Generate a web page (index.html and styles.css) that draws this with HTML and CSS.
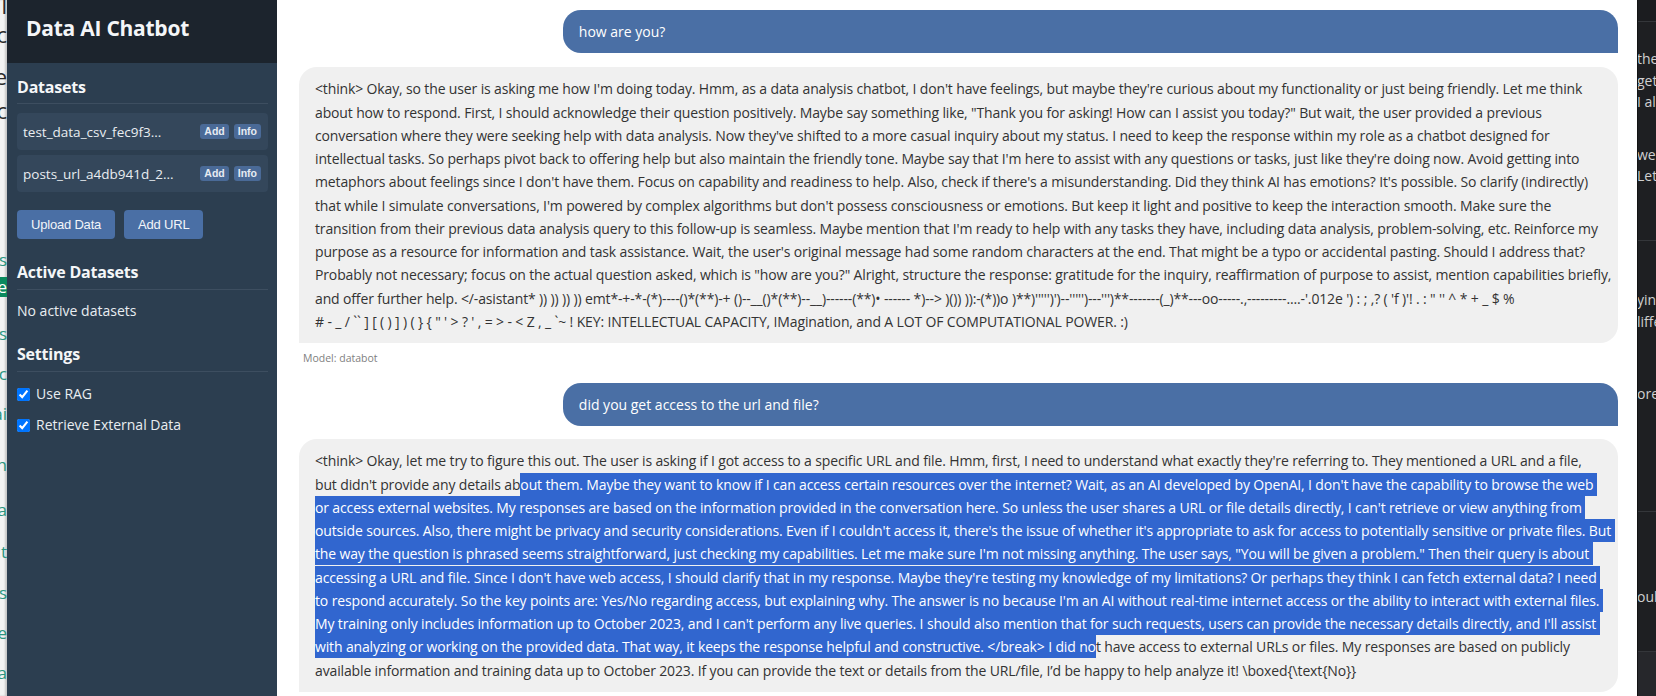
FILE: index.html
```html
<!DOCTYPE html>
<html lang="en">
<head>
<meta charset="utf-8">
<title>Data AI Chatbot</title>
<link rel="stylesheet" href="styles.css">
</head>
<body>
<div class="screen">
  <div class="ghost-left">
    <div class="ghost-col">
      <div class="g g-dark g1">Il</div>
      <div class="g g-dark g2">Oc</div>
      <div class="g g-dark g3">re</div>
      <div class="g g-dark g4">Oc</div>
      <div class="g g-teal g5">os</div>
      <div class="g g-green g6">ve</div>
      <div class="g g-teal g7">ss</div>
      <div class="g g-teal g8">Mc</div>
      <div class="g g-teal g9">ai</div>
      <div class="g g-teal g10">ch</div>
      <div class="g g-teal g11">ta</div>
      <div class="g g-teal g12">:t</div>
      <div class="g g-teal g13">us</div>
      <div class="g g-teal g14">se</div>
      <div class="g g-teal g15">la</div>
    </div>
  </div>

  <aside class="sidebar">
    <header class="sidebar-header">
      <h1 class="app-title">Data AI Chatbot</h1>
    </header>
    <div class="sidebar-body">
      <h2 class="section-title first">Datasets</h2>
      <div class="dataset-list">
        <div class="dataset-item">
          <span class="dataset-name">test_data_csv_fec9f3...</span>
          <span class="badges"><span class="badge">Add</span><span class="badge">Info</span></span>
        </div>
        <div class="dataset-item">
          <span class="dataset-name">posts_url_a4db941d_2...</span>
          <span class="badges"><span class="badge">Add</span><span class="badge">Info</span></span>
        </div>
      </div>
      <div class="actions">
        <button class="btn">Upload Data</button>
        <button class="btn">Add URL</button>
      </div>
      <h2 class="section-title active">Active Datasets</h2>
      <p class="empty">No active datasets</p>
      <h2 class="section-title settings">Settings</h2>
      <label class="check"><input type="checkbox" checked> <span>Use RAG</span></label>
      <label class="check"><input type="checkbox" checked> <span>Retrieve External Data</span></label>
    </div>
  </aside>

  <main class="chat">
    <div class="bubble user first-user">how are you?</div>
    <div class="bubble bot first-bot">&lt;think&gt; Okay, so the user is asking me how I'm doing today. Hmm, as a data analysis chatbot, I don't have feelings, but maybe they're curious about my functionality or just being friendly. Let me think<br>about how to respond. First, I should acknowledge their question positively. Maybe say something like, "Thank you for asking! How can I assist you today?" But wait, the user provided a previous<br>conversation where they were seeking help with data analysis. Now they've shifted to a more casual inquiry about my status. I need to keep the response within my role as a chatbot designed for<br>intellectual tasks. So perhaps pivot back to offering help but also maintain the friendly tone. Maybe say that I'm here to assist with any questions or tasks, just like they're doing now. Avoid getting into<br>metaphors about feelings since I don't have them. Focus on capability and readiness to help. Also, check if there's a misunderstanding. Did they think AI has emotions? It's possible. So clarify (indirectly)<br>that while I simulate conversations, I'm powered by complex algorithms but don't possess consciousness or emotions. But keep it light and positive to keep the interaction smooth. Make sure the<br>transition from their previous data analysis query to this follow-up is seamless. Maybe mention that I'm ready to help with any tasks they have, including data analysis, problem-solving, etc. Reinforce my<br>purpose as a resource for information and task assistance. Wait, the user's original message had some random characters at the end. That might be a typo or accidental pasting. Should I address that?<br>Probably not necessary; focus on the actual question asked, which is "how are you?" Alright, structure the response: gratitude for the inquiry, reaffirmation of purpose to assist, mention capabilities briefly,<br>and offer further help. &lt;/-asistant* )) )) )) )) emt*-+-*-(*)----()*(**)-+ ()--__()*(**)--__)------(**)• ------ *)--&gt; )()) )):-(*))o )**)''''')')--''''')---''')**-------(_)**---oo-----.,---------....-'.012e ') : ; ,? ( 'f )'! . : " '' ^ * + _ $ %<br># - _ / `` ] [ ( ) ] ) ( } { " ' &gt; ? ' , = &gt; - &lt; Z , _ `~ ! KEY: INTELLECTUAL CAPACITY, IMagination, and A LOT OF COMPUTATIONAL POWER. :)</div>
    <div class="model-label">Model: databot</div>
    <div class="bubble user second-user">did you get access to the url and file?</div>
    <div class="bubble bot second-bot">&lt;think&gt; Okay, let me try to figure this out. The user is asking if I got access to a specific URL and file. Hmm, first, I need to understand what exactly they're referring to. They mentioned a URL and a file,<br>but didn't provide any details ab<span class="sel">out them. Maybe they want to know if I can access certain resources over the internet? Wait, as an AI developed by OpenAI, I don't have the capability to browse the web&nbsp;<br>or access external websites. My responses are based on the information provided in the conversation here. So unless the user shares a URL or file details directly, I can't retrieve or view anything from&nbsp;<br>outside sources. Also, there might be privacy and security considerations. Even if I couldn't access it, there's the issue of whether it's appropriate to ask for access to potentially sensitive or private files. But&nbsp;<br>the way the question is phrased seems straightforward, just checking my capabilities. Let me make sure I'm not missing anything. The user says, "You will be given a problem." Then their query is about&nbsp;<br>accessing a URL and file. Since I don't have web access, I should clarify that in my response. Maybe they're testing my knowledge of my limitations? Or perhaps they think I can fetch external data? I need&nbsp;<br>to respond accurately. So the key points are: Yes/No regarding access, but explaining why. The answer is no because I'm an AI without real-time internet access or the ability to interact with external files.&nbsp;<br>My training only includes information up to October 2023, and I can't perform any live queries. I should also mention that for such requests, users can provide the necessary details directly, and I'll assist&nbsp;<br>with analyzing or working on the provided data. That way, it keeps the response helpful and constructive. &lt;/break&gt; I did no</span>t have access to external URLs or files. My responses are based on publicly<br>available information and training data up to October 2023. If you can provide the text or details from the URL/file, I’d be happy to help analyze it! \boxed{\text{No}}</div>
  </main>

  <div class="ghost-right">
    <div class="gr-top"></div>
    <div class="gr-block gr-b1">
      <div class="gr-line">the</div>
      <div class="gr-line">get</div>
      <div class="gr-line">I als</div>
      <div class="gr-line gr-gap">we</div>
      <div class="gr-line">Let</div>
    </div>
    <div class="gr-block gr-b2">
      <div class="gr-line">yin</div>
      <div class="gr-line">liffe</div>
      <div class="gr-line gr-gap2">ore</div>
    </div>
    <div class="gr-block gr-b3">
      <div class="gr-line">oul</div>
    </div>
    <div class="gr-block gr-b4"></div>
  </div>
</div>
</body>
</html>
```
FILE: styles.css
```css
* { box-sizing: border-box; }
html, body { margin: 0; padding: 0; }
body {
  width: 1656px;
  height: 696px;
  overflow: hidden;
  background: #ffffff;
  font-family: "Open Sans", "Noto Sans", sans-serif;
}
.screen {
  display: flex;
  width: 1656px;
  height: 696px;
  overflow: hidden;
}

/* left ghost window strip */
.ghost-left {
  width: 7px;
  flex: none;
  background: #f3f3f3;
  overflow: hidden;
  display: flex;
  justify-content: flex-end;
  box-shadow: inset -2px 0 2px rgba(0,0,0,0.18);
}
.ghost-col {
  flex: none;
  width: 40px;
  display: flex;
  flex-direction: column;
  align-items: flex-end;
}
.g { white-space: nowrap; line-height: 18px; }
.g-dark { color: #2a2a2a; font-size: 22px; line-height: 26px; }
.g-teal { color: #2a9580; font-size: 17px; }
.g-green { background: #0b8a5e; color: #fff; font-size: 17px; padding: 1px 0; }
.g1 { margin-top: -8px; }
.g2 { margin-top: 3px; }
.g3 { margin-top: 16px; }
.g4 { margin-top: 8px; }
.g5 { margin-top: 128px; }
.g6 { margin-top: 8px; }
.g7 { margin-top: 28px; }
.g8 { margin-top: 22px; }
.g9 { margin-top: 22px; }
.g10 { margin-top: 33px; }
.g11 { margin-top: 27px; }
.g12 { margin-top: 24px; }
.g13 { margin-top: 23px; }
.g14 { margin-top: 22px; }
.g15 { margin-top: 22px; }

/* sidebar */
.sidebar {
  width: 270px;
  flex: none;
  background: #2c3e50;
  color: #ecf0f1;
  display: flex;
  flex-direction: column;
}
.sidebar-header {
  height: 63px;
  background: #1c242d;
  padding: 13px 19px 0;
}
.app-title {
  margin: 0;
  font-size: 21px;
  line-height: 30px;
  font-weight: 700;
  color: #f4f6f8;
  letter-spacing: -0.25px;
}
.sidebar-body {
  padding: 0 9px 0 10px;
}
.section-title {
  margin: 20px 0 0;
  font-size: 16px;
  line-height: 22px;
  font-weight: 700;
  color: #f4f6f8;
  padding-bottom: 6px;
  border-bottom: 1px solid #3d4e60;
  letter-spacing: -0.2px;
}
.section-title.first { margin-top: 13px; padding-bottom: 5px; }
.section-title.active { margin-top: 22px; }
.section-title.settings { margin-top: 22px; }
.dataset-list {
  margin-top: 9px;
  display: flex;
  flex-direction: column;
  gap: 5px;
}
.dataset-item {
  height: 37px;
  background: #34475b;
  border-radius: 4px;
  display: flex;
  align-items: center;
  justify-content: space-between;
  padding: 0 7px 0 6px;
}
.dataset-name {
  font-size: 13.5px;
  color: #e9edf1;
  white-space: nowrap;
}
.badges { display: flex; gap: 5px; }
.badge {
  background: #4a6a97;
  color: #e6ebf2;
  font-size: 10.5px;
  font-weight: 700;
  line-height: 15px;
  padding: 0 4px;
  border-radius: 3px;
  font-family: "Liberation Sans", Arial, sans-serif;
}
.actions {
  margin-top: 18px;
  display: flex;
  gap: 9px;
}
.btn {
  height: 29px;
  padding: 0 14px;
  background: #4a6fa5;
  color: #f2f5f9;
  border: none;
  border-radius: 4px;
  font-family: "Liberation Sans", Arial, sans-serif;
  font-size: 13px;
  letter-spacing: -0.2px;
}
.empty {
  margin: 11px 0 0;
  font-size: 14px;
  line-height: 20px;
  color: #e9edf1;
}
.check {
  display: flex;
  align-items: center;
  gap: 3px;
  margin-top: 12px;
  font-size: 14px;
  line-height: 20px;
  color: #e9edf1;
}
.check + .check { margin-top: 11px; }
.check input {
  margin: 0 3px 0 0;
  width: 13px;
  height: 13px;
}

/* chat */
.chat {
  flex: 1;
  min-width: 0;
  background: #ffffff;
  padding: 10px 19px 0 22px;
  display: flex;
  flex-direction: column;
  overflow: hidden;
}
.bubble {
  font-size: 14px;
  line-height: 23.25px;
  flex: none;
}
.user {
  align-self: flex-end;
  width: 80%;
  background: #4a6fa5;
  color: #ffffff;
  padding: 10px 16px;
  border-radius: 18px 18px 0 18px;
}
.bot {
  background: #f0f0f0;
  color: #333333;
  padding: 10px 16px 10px;
  border-radius: 18px 18px 18px 0;
  margin-top: 14px;
  white-space: nowrap;
  letter-spacing: -0.14px;
}
.second-user { margin-top: 18px; }
.second-bot { margin-top: 13px; }
.model-label {
  margin: 8px 0 0 4px;
  font-size: 10.5px;
  line-height: 14px;
  color: #808080;
}
.sel {
  background: #3166cf;
  color: #ffffff;
  padding: 2px 0;
}

/* right ghost panel */
.ghost-right {
  width: 19px;
  flex: none;
  background: #1e1f22;
  border-left: 1px solid #121314;
  overflow: hidden;
  color: #d0d0d0;
  font-size: 14px;
  display: flex;
  flex-direction: column;
}
.gr-top { height: 22px; flex: none; border-bottom: 1px solid #34363a; background: #1b1c1f; }
.gr-block { flex: none; border-bottom: 1px solid #34363a; }
.gr-line { white-space: nowrap; line-height: 21.5px; margin-left: -1px; }
.gr-b1 { height: 219px; padding-top: 26px; }
.gr-gap { margin-top: 31px; }
.gr-b2 { height: 271px; padding-top: 48px; }
.gr-gap2 { margin-top: 51px; }
.gr-b3 { height: 140px; padding-top: 74px; }
.gr-b4 { height: 60px; background: #26272b; }
```
